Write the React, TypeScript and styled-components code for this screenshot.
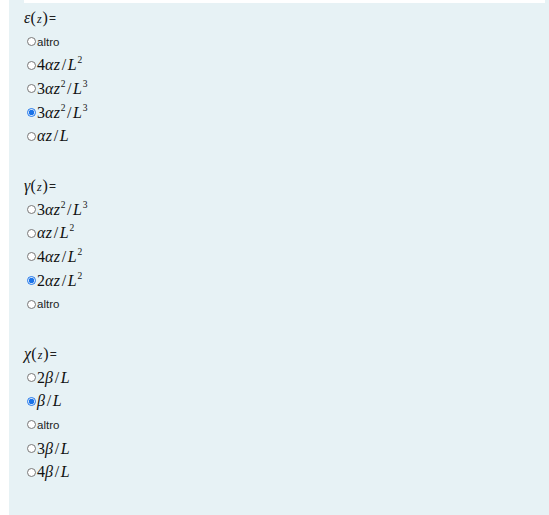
import React from 'react';
import styled, { createGlobalStyle } from 'styled-components';

const GlobalStyle = createGlobalStyle`
  html, body {
    margin: 0;
    padding: 0;
    background: #ffffff;
  }
  body {
    font-family: "Liberation Sans", Arial, sans-serif;
    color: #222;
  }
`;

const Page = styled.div`
  padding-left: 9px;
  height: 515px;
  overflow: hidden;
`;

const Panel = styled.div`
  background: #e7f2f5;
  min-height: 515px;
`;

// remains of the white box that sits above the question panel
const TopStrip = styled.div`
  height: 3px;
  margin: 0 4px 0 15px;
  background: #ffffff;
`;

const Content = styled.div`
  padding: 3px 0 0 15px;
`;

const Section = styled.div`
  margin-bottom: 26px;
`;

const Header = styled.div`
  height: 24px;
  display: flex;
  align-items: center;
  font-size: 12px;
`;

const Row = styled.label`
  height: 23.6px;
  display: flex;
  align-items: center;
  font-size: 11.5px;
  padding-left: 3px;
`;

const Radio = styled.input.attrs({ type: 'radio' })`
  width: 9px;
  height: 9px;
  margin: 0 1px 0 0;
  accent-color: #1a73e8;
`;

const Math = styled.span`
  font-family: "Liberation Serif", "Times New Roman", serif;
  font-size: 16px;
  line-height: 1;
  white-space: nowrap;
  color: #111;
`;

const I = styled.i`
  font-style: italic;
  letter-spacing: 0.3px;
`;

const Slash = styled.span`
  margin: 0 1.5px;
`;

const Sup = styled.sup`
  font-size: 9.5px;
  font-style: normal;
  vertical-align: 7px;
  line-height: 0;
  margin-left: 0.5px;
`;

const SmallVar = styled.i`
  font-style: italic;
  font-size: 12px;
  margin: 0 1px;
`;

const Eq = styled.span`
  margin-left: 1px;
`;

type Option = { node: React.ReactNode; checked?: boolean };

const altro = <span>altro</span>;
const S = <Slash>/</Slash>;

const sec1: Option[] = [
  { node: altro },
  { node: <Math>4<I>αz</I>{S}<I>L</I><Sup>2</Sup></Math> },
  { node: <Math>3<I>αz</I><Sup>2</Sup>{S}<I>L</I><Sup>3</Sup></Math> },
  { node: <Math>3<I>αz</I><Sup>2</Sup>{S}<I>L</I><Sup>3</Sup></Math>, checked: true },
  { node: <Math><I>αz</I>{S}<I>L</I></Math> },
];

const sec2: Option[] = [
  { node: <Math>3<I>αz</I><Sup>2</Sup>{S}<I>L</I><Sup>3</Sup></Math> },
  { node: <Math><I>αz</I>{S}<I>L</I><Sup>2</Sup></Math> },
  { node: <Math>4<I>αz</I>{S}<I>L</I><Sup>2</Sup></Math> },
  { node: <Math>2<I>αz</I>{S}<I>L</I><Sup>2</Sup></Math>, checked: true },
  { node: altro },
];

const sec3: Option[] = [
  { node: <Math>2<I>β</I>{S}<I>L</I></Math> },
  { node: <Math><I>β</I>{S}<I>L</I></Math>, checked: true },
  { node: altro },
  { node: <Math>3<I>β</I>{S}<I>L</I></Math> },
  { node: <Math>4<I>β</I>{S}<I>L</I></Math> },
];

const Question: React.FC<{ name: string; symbol: string; options: Option[] }> = ({ name, symbol, options }) => (
  <Section>
    <Header>
      <Math>
        <I>{symbol}</I>(<SmallVar>z</SmallVar>)
      </Math>
      <Eq>=</Eq>
    </Header>
    {options.map((o, i) => (
      <Row key={i}>
        <Radio name={name} defaultChecked={o.checked} />
        {o.node}
      </Row>
    ))}
  </Section>
);

const App: React.FC = () => (
  <Page>
    <GlobalStyle />
    <Panel>
      <TopStrip />
      <Content>
        <Question name="eps" symbol="ε" options={sec1} />
        <Question name="gamma" symbol="γ" options={sec2} />
        <Question name="chi" symbol="χ" options={sec3} />
      </Content>
    </Panel>
  </Page>
);

export default App;
